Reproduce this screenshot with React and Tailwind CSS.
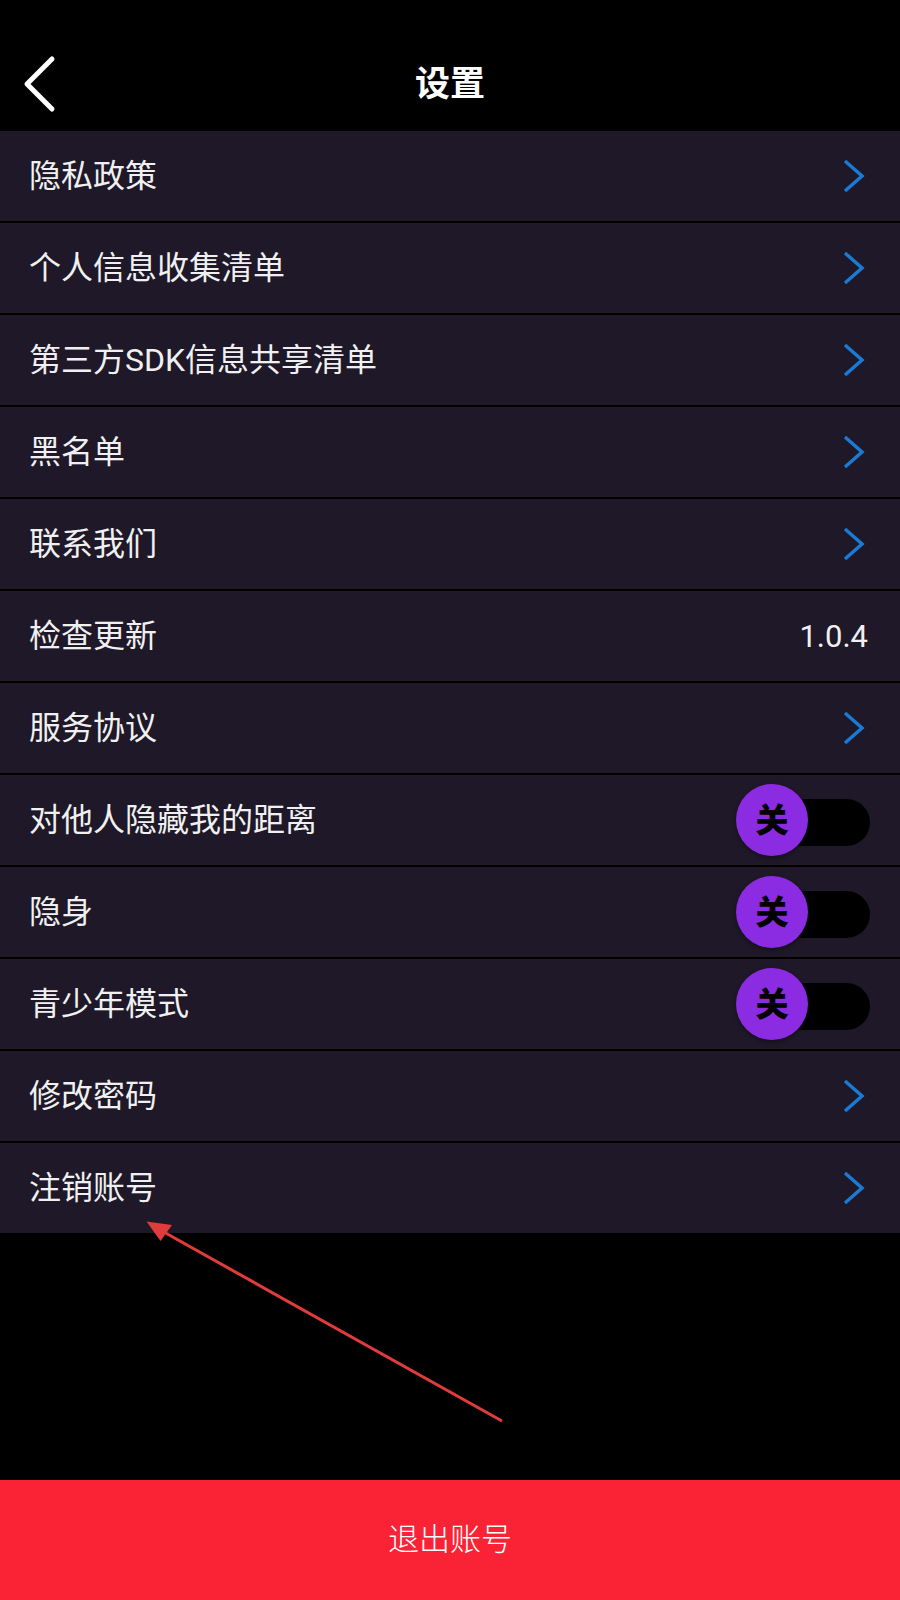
const rows = [
  { label: "隐私政策", kind: "link" },
  { label: "个人信息收集清单", kind: "link" },
  { label: "第三方SDK信息共享清单", kind: "link" },
  { label: "黑名单", kind: "link" },
  { label: "联系我们", kind: "link" },
  { label: "检查更新", kind: "version", value: "1.0.4" },
  { label: "服务协议", kind: "link" },
  { label: "对他人隐藏我的距离", kind: "toggle" },
  { label: "隐身", kind: "toggle" },
  { label: "青少年模式", kind: "toggle" },
  { label: "修改密码", kind: "link" },
  { label: "注销账号", kind: "link" },
];

const Chevron = () => (
  <svg width="26" height="36" viewBox="0 0 26 36" className="block">
    <path
      d="M3 3 L20 18 L3 33"
      fill="none"
      stroke="#1a7ad4"
      strokeWidth="3.5"
      strokeLinejoin="miter"
    />
  </svg>
);

const Toggle = () => (
  <div className="relative h-[72px] w-[134px]">
    <div className="absolute right-0 top-[15px] h-[47px] w-[104px] rounded-full bg-black" />
    <div className="absolute left-0 top-0 flex h-[72px] w-[72px] items-center justify-center rounded-full bg-[#8b2be2] text-[33px] font-black leading-none text-black shadow-[0_2px_4px_rgba(0,0,0,0.35)]">
      关
    </div>
  </div>
);

const Row = ({ row }) => (
  <div className="flex h-[90px] items-center justify-between bg-[#1e1828] pl-[29px] pr-[30px]">
    <span className="text-[32px] leading-none text-[#f0f0f0]">{row.label}</span>
    {row.kind === "link" && (
      <div className="pr-[2px]">
        <Chevron />
      </div>
    )}
    {row.kind === "version" && (
      <span className="pr-[2px] text-[31px] leading-none text-[#f0f0f0]">{row.value}</span>
    )}
    {row.kind === "toggle" && <Toggle />}
  </div>
);

export default function App() {
  return (
    <div
      className="relative flex h-[1600px] w-full flex-col bg-black"
      style={{ fontFamily: 'Roboto, "Noto Sans CJK SC", sans-serif' }}
    >
      <div className="pt-[37px]">
        <div className="relative flex h-[94px] items-center justify-center">
          <button className="absolute left-[20px] top-1/2 -translate-y-1/2">
            <svg width="40" height="60" viewBox="0 0 40 60" className="block">
              <path
                d="M32 5 L7 30 L32 55"
                fill="none"
                stroke="#ffffff"
                strokeWidth="5"
                strokeLinecap="round"
                strokeLinejoin="round"
              />
            </svg>
          </button>
          <h1 className="text-[35px] font-bold leading-none text-white">设置</h1>
        </div>
      </div>

      <div className="flex flex-col gap-[2px]">
        {rows.map((row) => (
          <Row key={row.label} row={row} />
        ))}
      </div>

      <div className="flex-1" />

      <button className="flex h-[120px] w-full items-center justify-center bg-[#fa2335] text-[31px] font-light text-white">
        退出账号
      </button>

      {/* annotation arrow */}
      <svg
        className="pointer-events-none absolute inset-0"
        width="900"
        height="1600"
        viewBox="0 0 900 1600"
      >
        <line x1="502" y1="1421" x2="162" y2="1231" stroke="#e23b3b" strokeWidth="3" />
        <polygon points="146.5,1221.5 172,1225 160.5,1241" fill="#e23b3b" />
      </svg>
    </div>
  );
}
